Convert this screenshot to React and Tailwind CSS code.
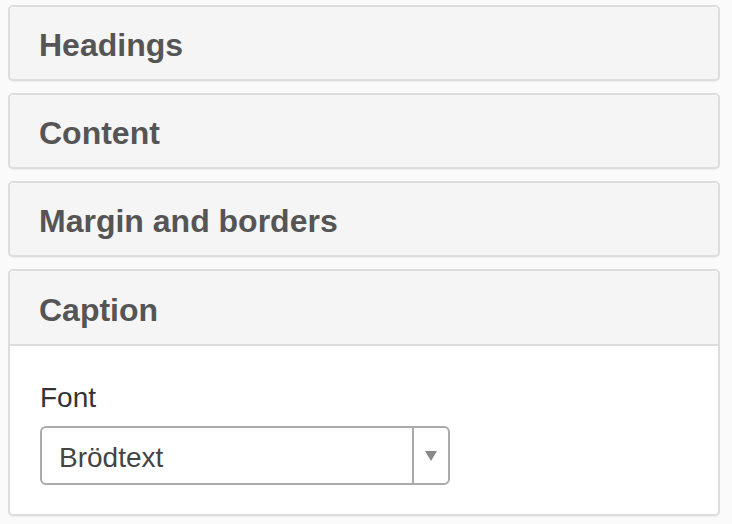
import React from "react";

function Panel({ title, children }) {
  return (
    <div className="rounded-[5px] border-2 border-[#dddddd] bg-white shadow-[0_1px_1px_rgba(0,0,0,0.05)] overflow-hidden">
      <div className="h-[72px] bg-[#f5f5f5] flex items-center pt-[4px] pl-[29px] text-[32px] font-bold text-[#555555] leading-none">
        {title}
      </div>
      {children}
    </div>
  );
}

export default function App() {
  return (
    <div
      className="w-[732px] h-[524px] bg-[#fafafa] pt-[5px] pl-[8px] pr-[12px] flex flex-col gap-[12px]"
      style={{ fontFamily: '"Liberation Sans", Arial, sans-serif' }}
    >
      <Panel title="Headings" />
      <Panel title="Content" />
      <Panel title="Margin and borders" />
      <div className="rounded-[5px] border-2 border-[#dddddd] bg-white shadow-[0_1px_1px_rgba(0,0,0,0.05)] overflow-hidden">
        <div className="h-[75px] bg-[#f5f5f5] border-b-2 border-[#dddddd] flex items-center pt-[4px] pl-[29px] text-[32px] font-bold text-[#555555] leading-none">
          Caption
        </div>
        <div className="pl-[30px] pt-[38px] pb-[29px]">
          <div className="text-[28px] text-[#333333] leading-none">Font</div>
          <div className="mt-[14px] w-[410px] h-[59px] rounded-[6px] border-2 border-[#aaaaaa] flex items-center bg-white">
            <div className="flex-1 pl-[17px] pt-[4px] text-[28px] text-[#444444] leading-none">Brödtext</div>
            <div className="w-[36px] h-full border-l-2 border-[#aaaaaa] flex items-center justify-center">
              <svg width="12" height="10" viewBox="0 0 12 10">
                <polygon points="0,0 12,0 6,10" fill="#888888" />
              </svg>
            </div>
          </div>
        </div>
      </div>
    </div>
  );
}
